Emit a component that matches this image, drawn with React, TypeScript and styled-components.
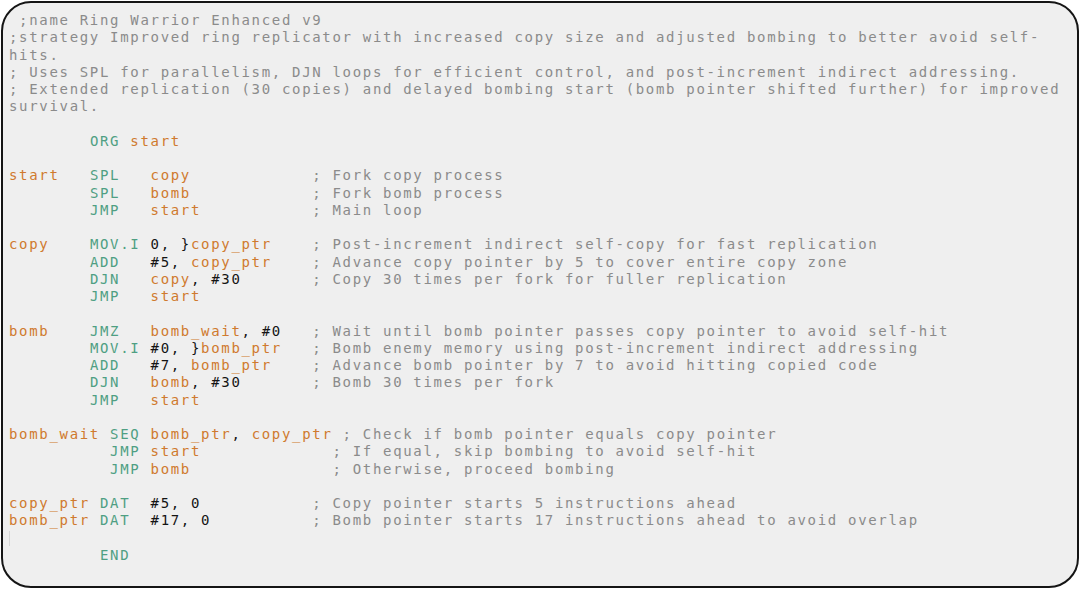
import React from "react";
import styled, { createGlobalStyle } from "styled-components";

const Global = createGlobalStyle`
  html, body { margin: 0; padding: 0; background: #ffffff; }
  #root { width: 1080px; height: 590px; }
`;

const Page = styled.div`
  box-sizing: border-box;
  width: 1080px;
  height: 590px;
  padding: 1px 1px 2px 1px;
  display: flex;
`;

const Frame = styled.section`
  box-sizing: border-box;
  flex: 1;
  border: 2px solid #151515;
  border-radius: 30px;
  background: #efefef;
  padding: 9px 6px 0 6px;
  overflow: hidden;
`;

const Code = styled.pre`
  margin: 0;
  font-family: "DejaVu Sans Mono", "Liberation Mono", monospace;
  font-size: 14px;
  letter-spacing: 1.68px;
  line-height: 17.25px;
  white-space: pre-wrap;
  color: #141414;
`;

const Line = styled.div`
  min-height: 17.25px;
`;

type Kind = "c" | "o" | "l" | "n";

const Tok = styled.span<{ $k: Kind }>`
  color: ${(p) =>
    p.$k === "c"
      ? "#8b8b8b"
      : p.$k === "o"
      ? "#4f9f83"
      : p.$k === "l"
      ? "#cf7a2e"
      : "#141414"};
`;

const Caret = styled.span`
  display: inline-block;
  width: 1px;
  height: 15px;
  vertical-align: -3px;
  background: #d6d6d6;
`;

type T = [Kind, string];

const lines: T[][] = [
  [["c", " ;name Ring Warrior Enhanced v9"]],
  [["c", ";strategy Improved ring replicator with increased copy size and adjusted bombing to better avoid self-hits."]],
  [["c", "; Uses SPL for parallelism, DJN loops for efficient control, and post-increment indirect addressing."]],
  [["c", "; Extended replication (30 copies) and delayed bombing start (bomb pointer shifted further) for improved survival."]],
  [],
  [["n", "        "], ["o", "ORG"], ["n", " "], ["l", "start"]],
  [],
  [["l", "start"], ["n", "   "], ["o", "SPL"], ["n", "   "], ["l", "copy"], ["n", "            "], ["c", "; Fork copy process"]],
  [["n", "        "], ["o", "SPL"], ["n", "   "], ["l", "bomb"], ["n", "            "], ["c", "; Fork bomb process"]],
  [["n", "        "], ["o", "JMP"], ["n", "   "], ["l", "start"], ["n", "           "], ["c", "; Main loop"]],
  [],
  [["l", "copy"], ["n", "    "], ["o", "MOV.I"], ["n", " 0, }"], ["l", "copy_ptr"], ["n", "    "], ["c", "; Post-increment indirect self-copy for fast replication"]],
  [["n", "        "], ["o", "ADD"], ["n", "   #5, "], ["l", "copy_ptr"], ["n", "    "], ["c", "; Advance copy pointer by 5 to cover entire copy zone"]],
  [["n", "        "], ["o", "DJN"], ["n", "   "], ["l", "copy"], ["n", ", #30       "], ["c", "; Copy 30 times per fork for fuller replication"]],
  [["n", "        "], ["o", "JMP"], ["n", "   "], ["l", "start"]],
  [],
  [["l", "bomb"], ["n", "    "], ["o", "JMZ"], ["n", "   "], ["l", "bomb_wait"], ["n", ", #0   "], ["c", "; Wait until bomb pointer passes copy pointer to avoid self-hit"]],
  [["n", "        "], ["o", "MOV.I"], ["n", " #0, }"], ["l", "bomb_ptr"], ["n", "   "], ["c", "; Bomb enemy memory using post-increment indirect addressing"]],
  [["n", "        "], ["o", "ADD"], ["n", "   #7, "], ["l", "bomb_ptr"], ["n", "    "], ["c", "; Advance bomb pointer by 7 to avoid hitting copied code"]],
  [["n", "        "], ["o", "DJN"], ["n", "   "], ["l", "bomb"], ["n", ", #30       "], ["c", "; Bomb 30 times per fork"]],
  [["n", "        "], ["o", "JMP"], ["n", "   "], ["l", "start"]],
  [],
  [["l", "bomb_wait"], ["n", " "], ["o", "SEQ"], ["n", " "], ["l", "bomb_ptr"], ["n", ", "], ["l", "copy_ptr"], ["n", " "], ["c", "; Check if bomb pointer equals copy pointer"]],
  [["n", "          "], ["o", "JMP"], ["n", " "], ["l", "start"], ["n", "             "], ["c", "; If equal, skip bombing to avoid self-hit"]],
  [["n", "          "], ["o", "JMP"], ["n", " "], ["l", "bomb"], ["n", "              "], ["c", "; Otherwise, proceed bombing"]],
  [],
  [["l", "copy_ptr"], ["n", " "], ["o", "DAT"], ["n", "  #5, 0           "], ["c", "; Copy pointer starts 5 instructions ahead"]],
  [["l", "bomb_ptr"], ["n", " "], ["o", "DAT"], ["n", "  #17, 0          "], ["c", "; Bomb pointer starts 17 instructions ahead to avoid overlap"]],
];

export default function App() {
  return (
    <>
      <Global />
      <Page>
        <Frame>
          <Code>
            {lines.map((toks, i) => (
              <Line key={i}>
                {toks.length === 0
                  ? " "
                  : toks.map(([k, s], j) => (
                      <Tok key={j} $k={k}>
                        {s}
                      </Tok>
                    ))}
              </Line>
            ))}
            <Line>
              <Caret />
            </Line>
            <Line>
              <Tok $k="n">{"         "}</Tok>
              <Tok $k="o">END</Tok>
            </Line>
          </Code>
        </Frame>
      </Page>
    </>
  );
}
